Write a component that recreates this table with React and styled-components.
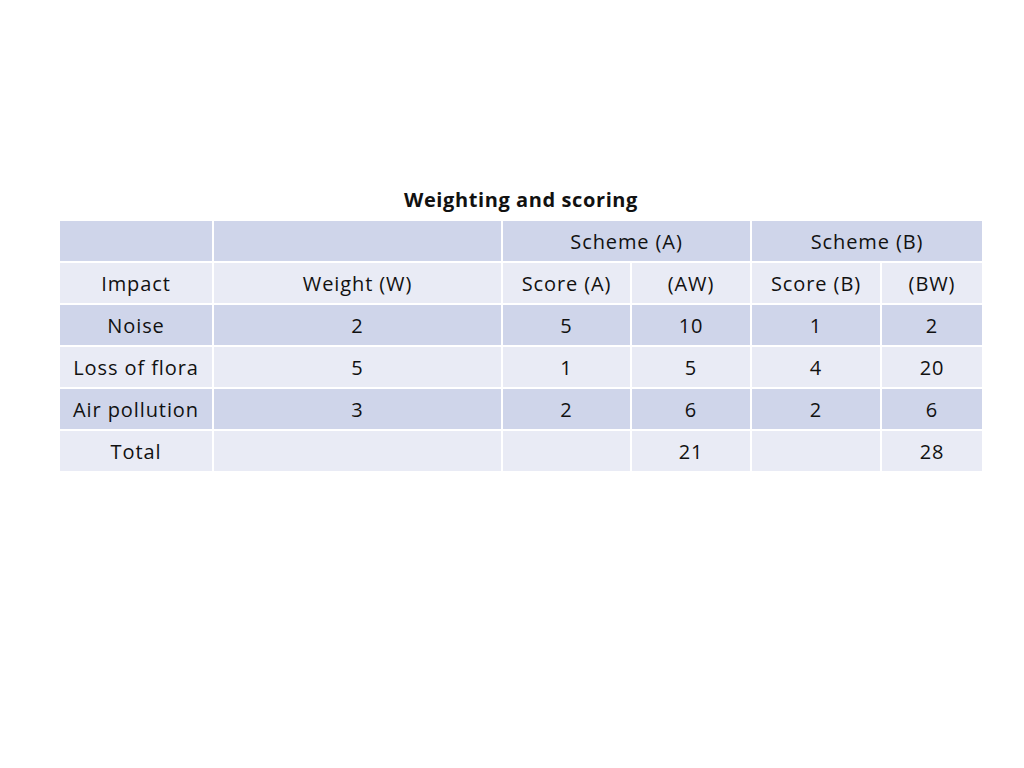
import React from "react";
import styled, { createGlobalStyle } from "styled-components";

const GlobalStyle = createGlobalStyle`
  html, body {
    margin: 0;
    padding: 0;
    background: #ffffff;
  }
  body {
    font-family: "Open Sans", Lato, "Liberation Sans", sans-serif;
    color: #111111;
  }
`;

const Page = styled.div`
  width: 1024px;
  height: 768px;
  padding-top: 186px;
  padding-left: 18px;
  box-sizing: border-box;
  display: flex;
  flex-direction: column;
  align-items: center;
`;

const Title = styled.div`
  font-weight: 700;
  font-size: 20px;
  letter-spacing: 0.6px;
  line-height: 28px;
  margin-bottom: 7px;
`;

const Grid = styled.div`
  display: grid;
  grid-template-columns: 152px 287px 127px 118px 128px 100px;
  grid-auto-rows: 40px;
  gap: 2px;
  background: #ffffff;
`;

const Cell = styled.div`
  grid-column: span ${(p) => p.span || 1};
  background: ${(p) => (p.dark ? "#cfd5ea" : "#e9ebf5")};
  display: flex;
  align-items: center;
  justify-content: center;
  font-size: 20px;
  letter-spacing: 0.9px;
  white-space: nowrap;
`;

const rows = [
  ["Noise", "2", "5", "10", "1", "2"],
  ["Loss of flora", "5", "1", "5", "4", "20"],
  ["Air pollution", "3", "2", "6", "2", "6"],
  ["Total", "", "", "21", "", "28"],
];

export default function App() {
  return (
    <>
      <GlobalStyle />
      <Page>
        <Title>Weighting and scoring</Title>
        <Grid>
          <Cell dark />
          <Cell dark />
          <Cell dark span={2}>Scheme (A)</Cell>
          <Cell dark span={2}>Scheme (B)</Cell>

          <Cell>Impact</Cell>
          <Cell>Weight (W)</Cell>
          <Cell>Score (A)</Cell>
          <Cell>(AW)</Cell>
          <Cell>Score (B)</Cell>
          <Cell>(BW)</Cell>

          {rows.map((row, i) =>
            row.map((v, j) => (
              <Cell key={`${i}-${j}`} dark={i % 2 === 0}>
                {v}
              </Cell>
            ))
          )}
        </Grid>
      </Page>
    </>
  );
}
